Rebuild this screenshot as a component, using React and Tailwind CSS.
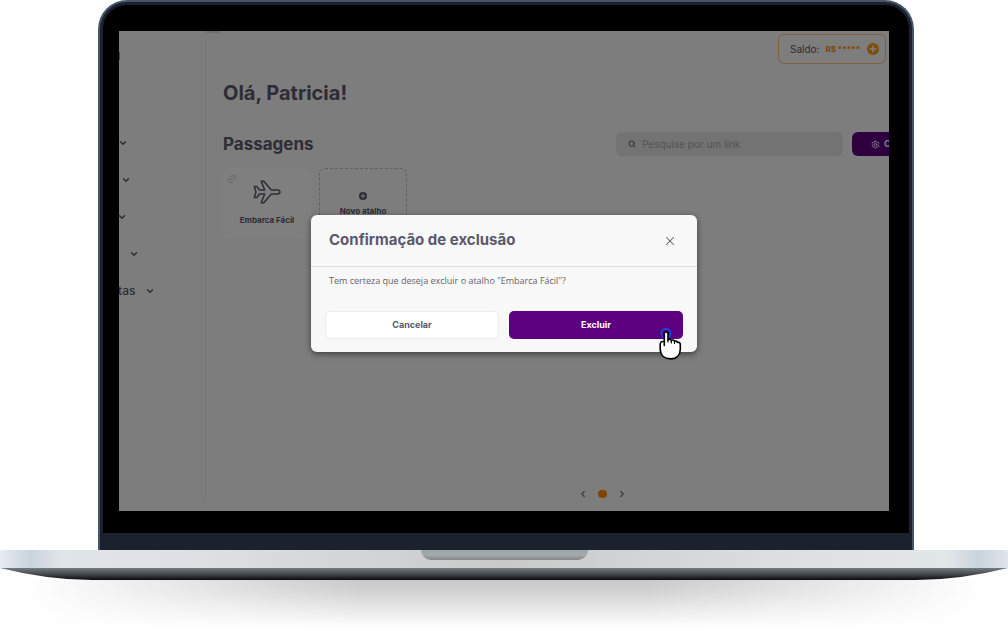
import React from "react";
import { ChevronDown, ChevronLeft, ChevronRight, Link2, Search, Settings, X } from "lucide-react";

const menuItems = [
  { id: "inicio", label: "", pad: "-ml-px" },
  { id: "viagens", label: "", pad: "pl-0.5" },
  { id: "contas", label: "", pad: "-ml-0.5" },
  { id: "relatorios", label: "", pad: "pl-2.5" },
  { id: "consultas", label: "tas", pad: "-ml-px" },
];

const PlaneIcon = () => (
  <svg width="28" height="24" viewBox="0 0 28 24" fill="none" stroke="#5c586c" strokeWidth="1.5" strokeLinejoin="round">
    <path d="M1.3 6.5h2.4l3 3.6h5L8.2 1.2h2.6l7.5 8.9h6.2c1.3 0 2.4.9 2.4 1.9s-1.1 1.9-2.4 1.9h-6.2l-7.5 8.9H8.2l3.5-8.9h-5l-3 3.6H1.3L3 12z" />
  </svg>
);

const PlusDot = ({ size }) => (
  <svg width={size} height={size} viewBox="0 0 12 12">
    <circle cx="6" cy="6" r="6" fill="currentColor" />
    <path d="M6 3v6M3 6h6" stroke="#fafafa" strokeWidth="1.5" strokeLinecap="round" />
  </svg>
);

const HandCursor = () => (
  <svg className="absolute -bottom-[21px] right-px h-8 w-6" viewBox="0 0 24 32" fill="none" aria-hidden="true">
    <circle cx="8" cy="5.5" r="4.7" stroke="#1746e0" strokeWidth="1.8" />
    <path
      d="M6.3 17.5V5.6c0-2.3 3.7-2.3 3.7 0V12c.5-1.3 3.1-1 3.3.6.7-1.1 3-.8 3.2.8.8-.8 2.6-.5 2.8 1 1-.5 3 .1 3 2v4.8c0 5.8-3.6 9.7-9.4 9.7-6.1 0-10.7-3.4-10.7-10.2v-4.3c0-2.2 1.7-3.2 4.1-3.2z"
      fill="#fff"
      stroke="#000"
      strokeWidth="1.6"
      strokeLinejoin="round"
    />
    <path d="M10 11.5V14M13.3 12.5V15M16.5 13.5v2" stroke="#000" strokeWidth="1.2" strokeLinecap="round" />
  </svg>
);

const Sidebar = () => (
  <aside className="mb-2 w-[87px] shrink-0 border-r border-[#eeeeee] text-[#5c586c]">
    <div className="mt-[21px] h-2 w-px bg-[#f08000]" />
    <ul className="mt-16">
      {menuItems.map((item) => (
        <li key={item.id} className="h-[37px]">
          <button type="button" aria-label={item.id} className={`flex h-full items-center ${item.pad}`}>
            {item.label && <span className="mr-2.5 text-xs font-medium">{item.label}</span>}
            <ChevronDown size={10} strokeWidth={3.5} />
          </button>
        </li>
      ))}
    </ul>
  </aside>
);

const Dashboard = () => (
  <main className="relative flex min-w-0 grow flex-col pl-[17px] text-[#5c586c]">
    <div className="absolute left-0 top-0 h-0.5 w-3.5 bg-[#dcdcdc]" />
    <div className="mr-[3px] mt-[3px] flex h-[30px] w-[108px] items-center self-end whitespace-nowrap rounded-md border border-[#ffc37d] pl-[11px] text-[10px]">
      <span>Saldo:</span>
      <span className="ml-1.5 text-[8px] font-bold text-[#ff8a00]">R$ *****</span>
      <button type="button" aria-label="Adicionar saldo" className="ml-auto mr-1.5 text-[#ff9a10]">
        <PlusDot size={12} />
      </button>
    </div>

    <h1 className="mt-[17px] text-[20px] font-bold leading-6">Olá, Patricia!</h1>

    <div className="mt-[27px] flex h-6 items-center">
      <h2 className="text-[17px] font-bold leading-6">Passagens</h2>
      <label className="ml-auto flex h-6 w-[227px] items-center gap-1.5 rounded-md bg-[#e6e6e6] pl-3">
        <Search size={8} strokeWidth={3} className="shrink-0" />
        <input
          type="search"
          aria-label="Pesquise por um link"
          placeholder="Pesquise por um link"
          className="min-w-0 grow text-[10px] outline-none placeholder:text-[#a6a6a6]"
        />
      </label>
      <button type="button" aria-label="Configurar" className="ml-[9px] flex h-6 w-[37px] items-center gap-1 overflow-hidden rounded-l-md bg-[#5c0080] pl-[19px] text-[9px] font-bold text-white">
        <Settings size={9} strokeWidth={2.5} className="shrink-0" />
        <span>C</span>
      </button>
    </div>

    <div className="mt-3 flex gap-2">
      <div className="relative flex h-[70px] w-22 flex-col items-center rounded-md bg-white pt-3">
        <Link2 size={10} strokeWidth={2.5} className="absolute left-1 top-1.5 -rotate-45 text-[#d0d0d0]" />
        <PlaneIcon />
        <span className="mt-2 text-[8px] font-bold leading-4">Embarca Fácil</span>
      </div>
      <button type="button" className="flex h-[70px] w-22 flex-col items-center rounded-md border border-dashed border-[#c4c4c4] pt-[23px]">
        <PlusDot size={8} />
        <span className="mt-[5px] text-[8px] font-bold leading-3">Novo atalho</span>
      </button>
    </div>

    <div className="mb-3 mt-auto flex items-center gap-2.5 self-center pl-[93px] text-[#77747f]">
      <button type="button" aria-label="Anterior"><ChevronLeft size={10} strokeWidth={3} /></button>
      <button type="button" aria-label="Página 1" className="h-2 w-[9px] rounded-full bg-[#ff8a00]" />
      <button type="button" aria-label="Próxima"><ChevronRight size={10} strokeWidth={3} /></button>
    </div>
  </main>
);

const ConfirmDialog = () => (
  <div className="absolute inset-0 flex items-start justify-center bg-black/50 pt-[184px]">
    <div role="dialog" aria-labelledby="dialog-title" className="w-[386px] rounded-md bg-[#f8f8f8] shadow-[0_2px_6px_rgba(0,0,0,0.5)]">
      <div className="flex h-[52px] items-center justify-between border-b border-[#dedee0] pl-[18px] pr-5">
        <h3 id="dialog-title" className="text-[15px] font-bold text-[#5c586c]">Confirmação de exclusão</h3>
        <button type="button" aria-label="Fechar" className="text-[#5f5f66]">
          <X size={14} strokeWidth={1.8} />
        </button>
      </div>
      <p className="px-[18px] pt-2 font-['Open_Sans',sans-serif] text-[9px] leading-3 text-[#66636e]">
        Tem certeza que deseja excluir o atalho "Embarca Fácil"?
      </p>
      <div className="grid grid-cols-2 gap-2.5 px-3.5 pb-[13px] pt-6 text-[9px] font-bold">
        <button type="button" className="h-7 rounded-[5px] border border-[#ececec] bg-white text-[#5c586c]">Cancelar</button>
        <div className="relative flex">
          <button type="button" className="h-7 grow rounded-[5px] bg-[#5c0080] text-white">Excluir</button>
          <HandCursor />
        </div>
      </div>
    </div>
  </div>
);

const LaptopBase = () => (
  <div>
    <div className="h-[18px] rounded-t-xs bg-[linear-gradient(to_right,#e6ebf0,#c9d4dd_3%,#e0e5e9_6%,#dde1e4_20%,#c9c9c9_50%,#dde1e4_80%,#e2e7ea_94%,#c9d4dd_97%,#dfe4e8)]">
      <div className="mx-auto h-2.5 w-[167px] rounded-b-[14px] bg-linear-to-b from-[#9ca5ab] via-[#a2a9ac] to-[#858585]" />
    </div>
    <svg className="block h-3 w-full" viewBox="0 0 1008 12" preserveAspectRatio="none">
      <defs>
        <linearGradient id="under" x1="0" y1="0" x2="0" y2="1">
          <stop offset="0" stopColor="#737c80" />
          <stop offset="0.5" stopColor="#464a4e" />
          <stop offset="1" stopColor="#0b0b0d" />
        </linearGradient>
      </defs>
      <path d="M0 0H1008Q960 12 916 12H92Q48 12 0 0z" fill="url(#under)" />
    </svg>
    <div className="mx-6 h-12 bg-[linear-gradient(to_right,#fff,transparent_35%,transparent_65%,#fff),linear-gradient(#c9c9c9,#d2d2d2_25%,#e8e8e8_60%,#fff)]" />
  </div>
);

export default function App() {
  return (
    <div className="overflow-hidden bg-white font-['Inter',sans-serif]">
      <div className="ml-[98px] mr-[94px] rounded-t-[29px] border-2 border-b-0 border-[#475569] bg-[#1b222d] px-[3px] pb-[17px] pt-[3px]">
        <div className="rounded-t-[24px] bg-black pb-[22px] pl-4 pr-5 pt-[26px]">
          <div className="relative flex h-[480px] overflow-hidden bg-[#fafafa]">
            <Sidebar />
            <Dashboard />
            <ConfirmDialog />
          </div>
        </div>
      </div>
      <LaptopBase />
    </div>
  );
}
